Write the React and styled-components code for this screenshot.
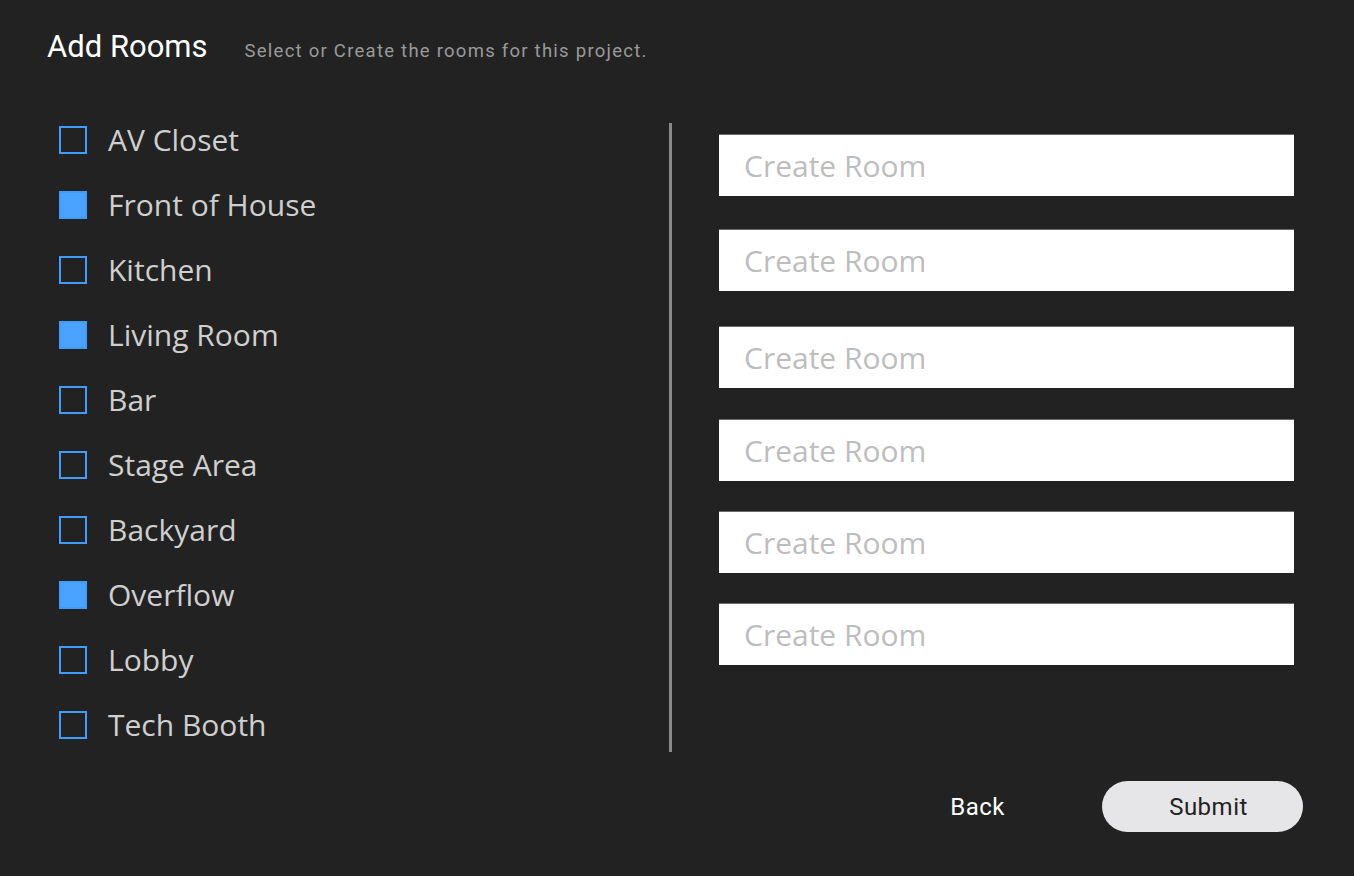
import React from "react";
import styled, { createGlobalStyle } from "styled-components";

const rooms = [
    { name: "AV Closet", checked: false },
    { name: "Front of House", checked: true },
    { name: "Kitchen", checked: false },
    { name: "Living Room", checked: true },
    { name: "Bar", checked: false },
    { name: "Stage Area", checked: false },
    { name: "Backyard", checked: false },
    { name: "Overflow", checked: true },
    { name: "Lobby", checked: false },
    { name: "Tech Booth", checked: false },
];

// spacing above each create field, the reference is not quite even
const fieldOffsets = [0, 33, 35, 31, 30, 30];

const GlobalStyle = createGlobalStyle`
    html, body {
        margin: 0;
        padding: 0;
        background: #222222;
    }
    * {
        box-sizing: border-box;
    }
`;

const App = () => {
    return (
        <>
            <GlobalStyle />
            <Page>
                <Header>
                    <Title>Add Rooms</Title>
                    <Subtitle>Select or Create the rooms for this project.</Subtitle>
                </Header>
                <Body>
                    <RoomList>
                        {rooms.map((room) => (
                            <RoomRow key={room.name}>
                                <Box $checked={room.checked} />
                                <RoomName>{room.name}</RoomName>
                            </RoomRow>
                        ))}
                    </RoomList>
                    <Divider />
                    <CreateList>
                        {fieldOffsets.map((offset, i) => (
                            <CreateInput key={i} $offset={offset} placeholder="Create Room" />
                        ))}
                    </CreateList>
                </Body>
                <Footer>
                    <BackButton>Back</BackButton>
                    <SubmitButton>Submit</SubmitButton>
                </Footer>
            </Page>
        </>
    );
};

const Page = styled.div`
    width: 1354px;
    height: 876px;
    background: #222222;
    display: flex;
    flex-direction: column;
    overflow: hidden;
`;

const Header = styled.div`
    display: flex;
    align-items: baseline;
    padding: 28px 0 0 47px;
    height: 107px;
`;

const Title = styled.h1`
    margin: 0;
    font-family: Roboto, "Liberation Sans", sans-serif;
    font-weight: 400;
    font-size: 31px;
    color: #ffffff;
`;

const Subtitle = styled.span`
    margin-left: 37px;
    font-family: Roboto, "Liberation Sans", sans-serif;
    font-size: 18.5px;
    letter-spacing: 1.25px;
    color: #9a9a9a;
`;

const Body = styled.div`
    display: flex;
`;

const RoomList = styled.div`
    width: 669px;
    padding-left: 59px;
    display: flex;
    flex-direction: column;
`;

const RoomRow = styled.div`
    height: 65px;
    display: flex;
    align-items: center;
`;

const Box = styled.span`
    width: 28px;
    height: 28px;
    border: 2.5px solid #3f9dff;
    background: ${(p) => (p.$checked ? "#4aa3ff" : "transparent")};
    flex-shrink: 0;
`;

const RoomName = styled.span`
    margin-left: 21px;
    font-family: "Open Sans", "Noto Sans", sans-serif;
    font-size: 30px;
    color: #cfcfcf;
`;

const Divider = styled.div`
    width: 3px;
    height: 629px;
    margin-top: 16px;
    background: #8a8a8a;
`;

const CreateList = styled.div`
    padding: 27px 0 0 47px;
    display: flex;
    flex-direction: column;
`;

const CreateInput = styled.input`
    width: 575px;
    height: 62px;
    margin-top: ${(p) => p.$offset}px;
    border: none;
    border-top: 1px solid #6a6a6a;
    outline: none;
    background: #ffffff;
    padding: 0 25px;
    font-family: "Open Sans", "Noto Sans", sans-serif;
    font-size: 30px;
    color: #333;
    &::placeholder {
        color: #bdbdbd;
    }
`;

const Footer = styled.div`
    display: flex;
    justify-content: flex-end;
    align-items: center;
    padding: 24px 51px 0 0;
`;

const BackButton = styled.button`
    border: none;
    background: transparent;
    padding: 0;
    font-family: Roboto, "Liberation Sans", sans-serif;
    font-size: 24px;
    letter-spacing: 0.5px;
    color: #ffffff;
    cursor: pointer;
`;

const SubmitButton = styled.button`
    margin-left: 97px;
    width: 201px;
    height: 51px;
    border: none;
    border-radius: 26px;
    padding: 0 0 0 12px;
    background: #e6e6e8;
    font-family: Roboto, "Liberation Sans", sans-serif;
    font-size: 24px;
    letter-spacing: 0.5px;
    color: #222222;
    cursor: pointer;
`;

export default App;
